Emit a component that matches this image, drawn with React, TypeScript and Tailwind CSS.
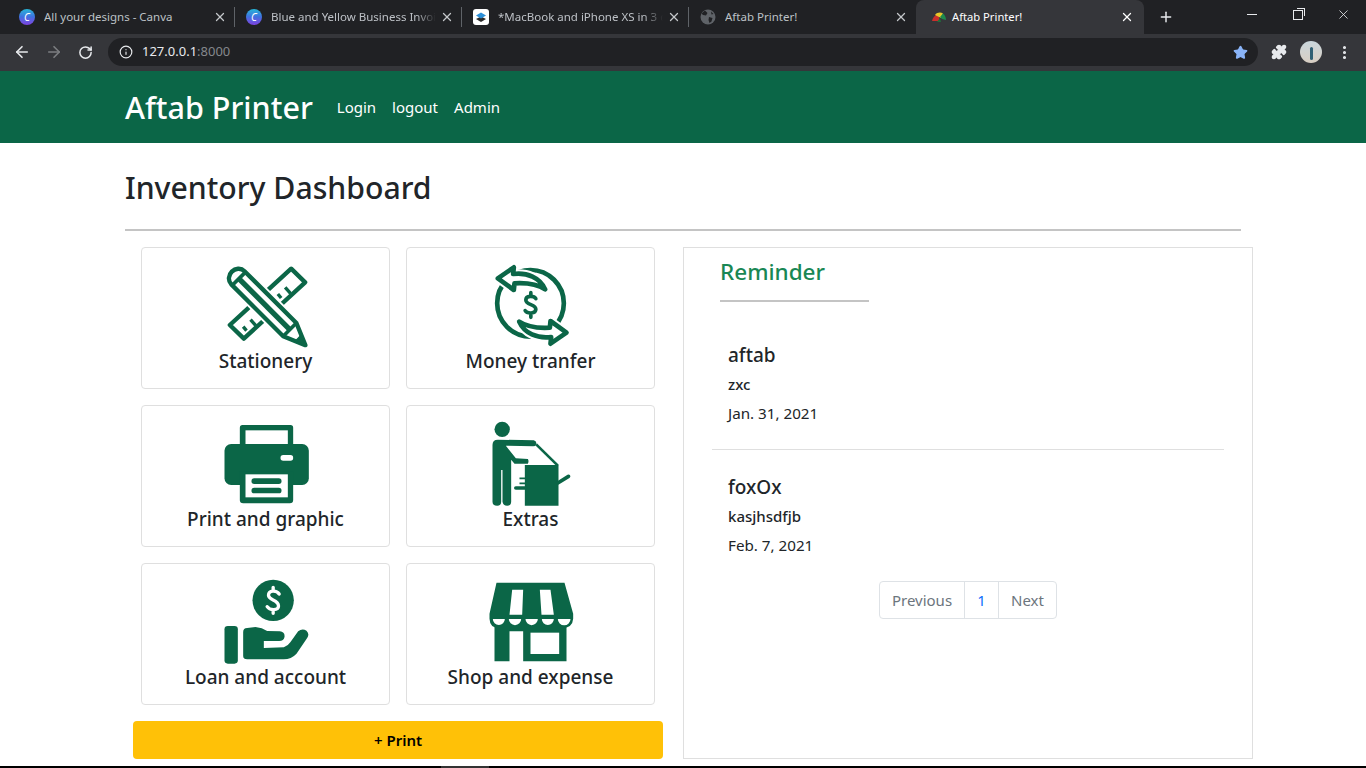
import { ArrowLeft, ArrowRight, Info, MoreVertical, Plus, Puzzle, RotateCw, Star, X } from 'lucide-react';
import type { ReactNode } from 'react';

const GREEN = '#0b6647';

function CanvaIcon() {
  return (
    <span className="flex h-4 w-4 shrink-0 items-center justify-center rounded-full bg-gradient-to-b from-[#25b5d6] via-[#3f6fe0] to-[#7a3fe0] text-[10px] leading-none italic text-white">
      C
    </span>
  );
}

function LayersIcon() {
  return (
    <span className="flex h-4 w-4 shrink-0 items-center justify-center rounded-[3px] bg-white">
      <svg width="12" height="12" viewBox="0 0 12 12">
        <path d="M1 8 6 5.5 11 8 6 11Z" fill="#2a2a2a" />
        <path d="M1 4.5 6 1.5 11 4.5 6 7.5Z" fill="#2b8fd8" />
      </svg>
    </span>
  );
}

function GlobeIcon() {
  return (
    <svg className="shrink-0" width="16" height="16" viewBox="0 0 16 16">
      <circle cx="8" cy="8" r="7.5" fill="#5f6368" />
      <path d="M5 1.5 7.5 4 6 6.5 3 6 1.5 4.5Z M9 8l3.5 1-1 3.5L9.5 14 8.5 11Z M11 2.5l2.5 2.5-2 .5Z" fill="#202124" />
    </svg>
  );
}

function UmbrellaIcon() {
  return (
    <svg className="shrink-0" width="16" height="16" viewBox="0 0 16 16">
      <path d="M1 12C2 8 4 6 7 5L9 12Z" fill="#c9302c" />
      <path d="M4 6C6 3 10 3 12 4.5L10 9Z" fill="#e8c82a" />
      <path d="M9 8 12 4.5C14 6 15 8.5 15 11L11 10Z" fill="#1f8a4c" />
      <path d="M6 13 9 9 10 13Z" fill="#1f6f3c" />
    </svg>
  );
}

const TABS: { title: string; icon: ReactNode; fade?: boolean }[] = [
  { title: 'All your designs - Canva', icon: <CanvaIcon /> },
  { title: 'Blue and Yellow Business Invoice', icon: <CanvaIcon />, fade: true },
  { title: '*MacBook and iPhone XS in 3 different', icon: <LayersIcon />, fade: true },
  { title: 'Aftab Printer!', icon: <GlobeIcon /> },
];

function BrowserChrome() {
  return (
    <div className="shrink-0 bg-[#202124]">
      <div className="flex h-[34px] items-end pl-[12px]">
        {TABS.map((t, i) => (
          <div key={i} className="flex h-[34px] w-[227px] items-center pr-[4px] pl-[7px]">
            {t.icon}
            <span
              className={`ml-[9px] w-[165px] overflow-hidden text-[11.5px] whitespace-nowrap text-[#bdc1c6] ${
                t.fade ? '[mask-image:linear-gradient(to_right,black_88%,transparent)]' : ''
              }`}
            >
              {t.title}
            </span>
            <X className="ml-auto shrink-0 text-[#c4c7ca]" size={14} strokeWidth={2.2} />
            <span className={`ml-[7px] h-[20px] w-px shrink-0 ${i < 3 ? 'bg-[#5f6368]' : 'bg-transparent'}`} />
          </div>
        ))}
        <div className="ml-[-4px] flex h-[34px] w-[228px] items-center rounded-t-lg bg-[#35363a] pr-[10px] pl-[15px]">
          <UmbrellaIcon />
          <span className="ml-[5px] text-[11.2px] text-white">Aftab Printer!</span>
          <X className="ml-auto text-white" size={14} strokeWidth={2.2} />
        </div>
        <Plus className="mb-[9px] ml-[14px] text-[#e8eaed]" size={16} strokeWidth={2.2} />
        <div className="mb-[12px] ml-[73px] flex items-center text-[#e8eaed]">
          <span className="h-px w-[10px] bg-[#e8eaed]" />
          <span className="relative ml-[36px] h-[10px] w-[10px] border border-[#e8eaed]">
            <span className="absolute top-[-3px] right-[-3px] h-[8px] w-[8px] border-t border-r border-[#e8eaed]" />
          </span>
          <X size={15} strokeWidth={1.3} className="ml-[33px]" />
        </div>
      </div>
      <div className="flex h-[37px] items-start bg-[#35363a] pt-[4px]">
        <div className="flex h-[28px] w-[108px] items-center pl-[13px]">
          <ArrowLeft className="text-[#e8eaed]" size={18} strokeWidth={2.2} />
          <ArrowRight className="ml-[14px] text-[#7c7e81]" size={18} strokeWidth={2.2} />
          <RotateCw className="ml-[15px] text-[#e8eaed]" size={15} strokeWidth={2.4} />
        </div>
        <div className="flex h-[28px] w-[1150px] items-center rounded-full bg-[#202124] pl-[11px] pr-[10px]">
          <Info className="text-[#e8eaed]" size={14} strokeWidth={2} />
          <span className="ml-[9px] text-[13px] text-[#e8eaed]">
            127.0.0.1<span className="text-[#85888c]">:8000</span>
          </span>
          <Star className="ml-auto fill-[#8ab4f8] text-[#8ab4f8]" size={15} />
        </div>
        <div className="flex h-[28px] items-center">
          <Puzzle className="ml-[13px] fill-[#e8eaed] text-[#e8eaed]" size={16} />
          <span className="ml-[13px] flex h-[22px] w-[22px] items-end justify-center overflow-hidden rounded-full bg-gradient-to-b from-[#c9d6dc] to-[#d9cfc3]">
            <span className="mb-[3px] h-[13px] w-[3px] rounded-full bg-[#2f5f73]" />
          </span>
          <MoreVertical className="ml-[14px] text-[#e8eaed]" size={17} strokeWidth={2.4} />
        </div>
      </div>
    </div>
  );
}

const PENCIL = 'M-10 0C-10-14 0-28 16-28L236-28 302 0 236 28 16 28C0 28-10 14-10 0Z';
const ARROW = 'M82 85 130 52 128 72C170 67 208 82 224 118 205 105 170 98 132 100L130 120Z';

function StationeryIcon() {
  return (
    <svg width="100" height="88" viewBox="46.5 36 300 264">
      <g fill="none" stroke={GREEN} strokeWidth="13" strokeLinejoin="round">
        <path d="M272 56 314 97 130 266 88 225Z" />
        <path d="M254 112 270 130M232 132 242 144M212 152 228 170M150 209 166 227M128 230 138 242" strokeWidth="10" />
      </g>
      <g transform="translate(101 72) rotate(45)">
        <path d={PENCIL} fill="#fff" stroke="#fff" strokeWidth="24" />
        <path d={PENCIL} fill="#fff" stroke={GREEN} strokeWidth="13" strokeLinejoin="round" />
        <path d="M20-28V28M236-28V28" fill="none" stroke={GREEN} strokeWidth="11" />
        <path d="M20 0H236" fill="none" stroke={GREEN} strokeWidth="16" />
        <path d="M272-12 302 0 272 12Z" fill={GREEN} stroke={GREEN} strokeWidth="4" />
      </g>
    </svg>
  );
}

function MoneyIcon() {
  return (
    <svg width="100" height="88" viewBox="31.5 36 300 264">
      <circle cx="180" cy="160" r="100" fill="none" stroke={GREEN} strokeWidth="14" />
      <path d={ARROW} fill="#fff" stroke="#fff" strokeWidth="26" />
      <path d={ARROW} fill="#fff" stroke={GREEN} strokeWidth="14" strokeLinejoin="round" />
      <g transform="rotate(180 185 166.5)">
        <path d={ARROW} fill="#fff" stroke="#fff" strokeWidth="26" />
        <path d={ARROW} fill="#fff" stroke={GREEN} strokeWidth="14" strokeLinejoin="round" />
      </g>
      <path
        d="M196 146C190 136 166 136 166 150 166 166 196 162 196 178 196 192 170 192 164 182M181 128V136M181 192V202"
        fill="none"
        stroke={GREEN}
        strokeWidth="11"
        strokeLinecap="round"
      />
    </svg>
  );
}

function PrinterIcon() {
  return (
    <svg width="100" height="88" viewBox="46.5 15 300 264">
      <path d="M126 30H270Q278 30 278 38V100H118V38Q118 30 126 30Z" fill={GREEN} />
      <rect x="135" y="46" width="127" height="42" fill="#fff" />
      <rect x="72" y="87" width="253" height="123" rx="20" fill={GREEN} />
      <rect x="240" y="120" width="38" height="17" rx="8" fill="#fff" />
      <path d="M118 170H278V255Q278 265 268 265H128Q118 265 118 255Z" fill={GREEN} />
      <rect x="135" y="178" width="127" height="69" fill="#fff" />
      <rect x="153" y="190" width="90" height="17" rx="8" fill={GREEN} />
      <rect x="153" y="218" width="90" height="17" rx="8" fill={GREEN} />
    </svg>
  );
}

function CopierIcon() {
  return (
    <svg width="100" height="88" viewBox="31.5 15 300 264">
      <circle cx="95" cy="43" r="23" fill={GREEN} />
      <path
        d="M66 90Q66 74 82 74L190 76Q198 78 198 86 196 94 188 94L106 92 136 130 172 132Q176 138 172 146L132 146 122 134V260Q122 272 110 272 98 272 96 260V165H92V260Q92 272 80 272 66 272 66 260Z"
        fill={GREEN}
      />
      <path d="M163 150H264V272H163Z" fill={GREEN} />
      <path d="M197 88 262 152" stroke={GREEN} strokeWidth="8" fill="none" />
      <path d="M262 204 294 184" stroke={GREEN} strokeWidth="11" strokeLinecap="round" fill="none" />
      <path d="M147 190H165M147 205H165" stroke={GREEN} strokeWidth="5" fill="none" />
      <path d="M136 219H165" stroke={GREEN} strokeWidth="11" strokeLinecap="round" fill="none" />
    </svg>
  );
}

function LoanIcon() {
  return (
    <svg width="100" height="88" viewBox="46.5 18 300 264">
      <circle cx="218" cy="85" r="62" fill={GREEN} />
      <path
        d="M236 66C228 54 204 54 204 70 204 86 234 82 234 102 234 116 208 116 200 104M218 46V54M218 116V124"
        fill="none"
        stroke="#fff"
        strokeWidth="10"
        strokeLinecap="round"
      />
      <rect x="72" y="162" width="40" height="113" rx="10" fill={GREEN} />
      <path
        d="M128 180Q128 168 140 168L165 165Q185 167 200 177L238 178Q254 180 252 195 250 207 236 207L190 207 190 228 250 226Q262 222 270 210L293 178Q305 168 318 176 328 186 320 198L288 245Q272 262 250 262L140 262Q128 262 128 252Z"
        fill={GREEN}
      />
    </svg>
  );
}

function ShopIcon() {
  return (
    <svg width="100" height="88" viewBox="31.5 18 300 264">
      <path d="M78 32H282L308 125V140Q306 170 270 168H90Q58 170 57 140V125Z" fill={GREEN} />
      <path d="M125 53H158L155 128H117ZM208 53H240L250 128H213Z" fill="#fff" />
      <path
        d="M67 141H103A18 18 0 0 1 67 141ZM115 141H152A18 18 0 0 1 115 141ZM165 141H202A18 18 0 0 1 165 141ZM214 141H250A18 18 0 0 1 214 141ZM262 141H300A19 19 0 0 1 262 141Z"
        fill="#fff"
      />
      <path d="M72 165H288V268H158V178H117V268H72Z" fill={GREEN} />
      <rect x="180" y="182" width="86" height="64" fill="#fff" />
    </svg>
  );
}

const CARDS: { label: string; icon: ReactNode }[] = [
  { label: 'Stationery', icon: <StationeryIcon /> },
  { label: 'Money tranfer', icon: <MoneyIcon /> },
  { label: 'Print and graphic', icon: <PrinterIcon /> },
  { label: 'Extras', icon: <CopierIcon /> },
  { label: 'Loan and account', icon: <LoanIcon /> },
  { label: 'Shop and expense', icon: <ShopIcon /> },
];

const REMINDERS = [
  { name: 'aftab', note: 'zxc', date: 'Jan. 31, 2021' },
  { name: 'foxOx', note: 'kasjhsdfjb', date: 'Feb. 7, 2021' },
];

export default function App() {
  return (
    <div className="flex h-screen flex-col overflow-hidden bg-white font-['Noto_Sans',sans-serif] text-[#212529]">
      <BrowserChrome />

      <nav className="flex h-[72px] shrink-0 items-center bg-[#0b6647] pl-[125px] text-white">
        <span className="text-[30.5px] leading-none font-medium">Aftab Printer</span>
        <a className="ml-[24px] text-[15px]">Login</a>
        <a className="ml-[16px] text-[15px]">logout</a>
        <a className="ml-[16px] text-[15px]">Admin</a>
      </nav>

      <main className="min-h-0 flex-1 pt-[26px] pl-[125px]">
        <h1 className="text-[30.2px] leading-[38px] font-medium">Inventory Dashboard</h1>
        <hr className="mt-[22px] w-[1116px] border-t-2 border-[#c4c4c4]" />

        <div className="mt-[16px] flex">
          <div className="ml-[8px] w-[530px]">
            <div className="grid grid-cols-[249px_249px] gap-4 px-2">
              {CARDS.map((c) => (
                <div
                  key={c.label}
                  className="flex h-[142px] flex-col items-center rounded border border-[#dfdfdf] pt-[14px]"
                >
                  {c.icon}
                  <span className="-mt-px text-[19px] leading-[24px] font-medium">{c.label}</span>
                </div>
              ))}
            </div>
            <button className="mt-4 h-[38px] w-full rounded bg-[#ffc107] text-[15px] font-semibold text-black">
              + Print
            </button>
          </div>

          <section className="ml-[20px] h-[512px] w-[570px] border border-[#dfdfdf]">
            <h2 className="mt-[9px] ml-[36px] text-[22.5px] leading-[29px] font-medium text-[#198754]">Reminder</h2>
            <hr className="mt-[14px] ml-[36px] w-[149px] border-t-2 border-[#c4c4c4]" />

            <div className="mt-[41px] ml-[28px] w-[512px]">
              {REMINDERS.map((r, i) => (
                <div key={r.name} className={i === 0 ? 'border-b border-[#dfdfdf] pb-[26px]' : 'pt-[25px]'}>
                  <div className="pl-4 text-[19px] leading-[24px] font-medium">{r.name}</div>
                  <div className="mt-[7px] pl-4 text-[15px] leading-[20px] font-medium">{r.note}</div>
                  <div className="mt-[9px] pl-4 text-[15.2px] leading-[20px]">{r.date}</div>
                </div>
              ))}
            </div>

            <div className="mt-[26px] ml-[195px] flex h-[38px] w-[178px] rounded border border-[#dee2e6] text-[15px] text-[#6c757d]">
              <span className="flex w-[85px] items-center justify-center border-r border-[#dee2e6]">Previous</span>
              <span className="flex w-[34px] items-center justify-center border-r border-[#dee2e6] text-[#0d6efd]">1</span>
              <span className="flex flex-1 items-center justify-center">Next</span>
            </div>
          </section>
        </div>
      </main>

      <div className="flex h-[2px] shrink-0 bg-black">
        <span className="ml-[441px] w-[48px] bg-[#333]" />
      </div>
    </div>
  );
}
